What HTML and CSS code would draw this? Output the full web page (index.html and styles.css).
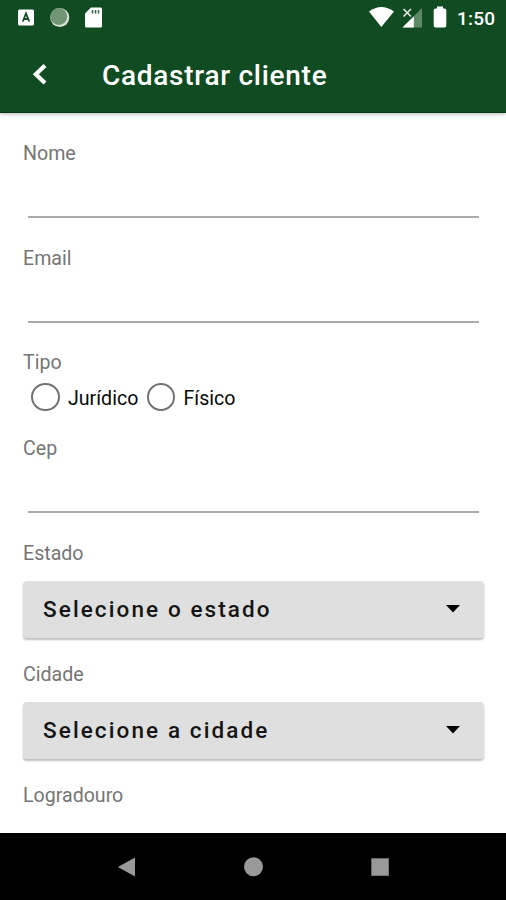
FILE: index.html
```html
<!DOCTYPE html>
<html lang="pt-BR">
<head>
<meta charset="utf-8">
<title>Cadastrar cliente</title>
<link rel="stylesheet" href="styles.css">
</head>
<body>
<div class="screen">
  <header class="header">
    <div class="status">
      <svg class="status-left" width="110" height="36" viewBox="0 0 110 36">
        <rect x="18" y="9.5" width="16" height="16" rx="1.5" fill="#fff"/>
        <path d="M22.8 21.5 26 13.5l3.2 8M24 19h4" fill="none" stroke="#174b25" stroke-width="1.8"/>
        <circle cx="59.8" cy="17.500" r="9.500" fill="#d7e6d8"/>
        <circle cx="58.800" cy="16.500" r="8.500" fill="#729477"/>
        <path d="M91 7.5h9.5q1.5 0 1.5 1.5v17q0 1.5-1.5 1.5h-14Q85 27.500 85 26V13.500z" fill="#fff"/>
        <path d="M92.500 10v3.500M95.500 10v3.500M98.500 10v3.500" stroke="#416b4b" stroke-width="1.600"/>
      </svg>
      <svg class="status-right" width="90" height="36" viewBox="365 0 90 36">
        <path d="M369 11.500Q381.300 2.500 394 11.500L381.300 27z" fill="#fff"/>
        <path d="M422 8v19.500h-19.500z" fill="#5e8968"/>
        <path d="M413.800 16.200v11.300H402.500z" fill="#fff"/>
        <path d="m403.500 9 7.500 7.500m0-7.500-7.500 7.500" stroke="#dce8de" stroke-width="1.700"/>
        <path d="M437 6.500h6v2h1.500q1.800 0 1.800 1.800v15.400q0 1.800-1.800 1.800h-9q-1.800 0-1.800-1.800V10.300q0-1.800 1.800-1.800h1.500z" fill="#fff"/>
      </svg>
      <span class="clock">1:50</span>
    </div>
    <div class="bar">
      <svg class="back" width="16" height="24" viewBox="0 0 16 24"><path d="M14 2.500 4.800 11.300l9.200 8.800" fill="none" stroke="#fff" stroke-width="4.200"/></svg>
      <h1 class="title">Cadastrar cliente</h1>
    </div>
  </header>
  <main class="form">
    <div class="field"><label class="label" for="nome">Nome</label><input class="input" id="nome"></div>
    <div class="field"><label class="label" for="email">Email</label><input class="input" id="email"></div>
    <div class="types">
      <span class="label">Tipo</span>
      <div class="options">
        <span class="radio"></span><span class="option first">Jurídico</span>
        <span class="radio"></span><span class="option">Físico</span>
      </div>
    </div>
    <div class="field"><label class="label" for="cep">Cep</label><input class="input" id="cep"></div>
    <div class="choice"><span class="label">Estado</span>
      <div class="select"><span class="estado">Selecione o estado</span><svg width="14" height="8" viewBox="0 0 14 8"><path d="M0 0h14L7 7.500z"/></svg></div>
    </div>
    <div class="choice"><span class="label">Cidade</span>
      <div class="select"><span class="cidade">Selecione a cidade</span><svg width="14" height="8" viewBox="0 0 14 8"><path d="M0 0h14L7 7.500z"/></svg></div>
    </div>
    <span class="label">Logradouro</span>
  </main>
  <nav class="nav">
    <svg width="20" height="20" viewBox="0 0 20 20"><path d="M.8 10 18 .5v19z" fill="#999"/></svg>
    <svg width="20" height="20" viewBox="0 0 20 20"><circle cx="9.500" cy="9.800" r="9.500" fill="#999"/></svg>
    <svg width="20" height="20" viewBox="0 0 20 20"><path d="M1.300 1.300h17.500v17.500H1.300z" fill="#999"/></svg>
  </nav>
</div>
</body>
</html>
```

FILE: styles.css
```css
* { box-sizing: border-box; }
body { margin: 0; background: #fff; font-family: Roboto, sans-serif; }
.screen { width: 506px; height: 900px; display: flex; flex-direction: column; overflow: hidden; }
.header { height: 113px; flex: none; background: #104b22; color: #fff; border-bottom: 1px solid #0a3514; box-shadow: 0 1px 4px rgba(0,0,0,.3); }
.status { display: flex; height: 36px; }
.status svg { display: block; }
.status-right { margin-left: 255px; }
.clock { margin-left: 2px; font-size: 19px; font-weight: 500; line-height: 37px; letter-spacing: .2px; white-space: nowrap; }
.bar { display: flex; align-items: center; height: 77px; padding-left: 31px; }
.title { margin: 2px 0 0 55px; font-size: 28px; font-weight: 500; line-height: 36px; letter-spacing: .72px; white-space: nowrap; }
.form { flex: 1; min-height: 0; padding: 26px 22px 0 23px; overflow: hidden; }
.label { display: block; height: 28px; line-height: 29px; font-size: 19.6px; color: #757575; white-space: nowrap; }
.field { height: 104.7px; }
.input { display: block; width: 451px; height: 51px; margin: 0 0 0 5px; padding: 0; border: 0; border-bottom: 2px solid #aaa; border-radius: 0; background: transparent; outline: 0; font: 20px Roboto, sans-serif; }
.types { height: 86px; }
.options { display: flex; align-items: center; height: 42px; padding-left: 8px; }
.radio { width: 28.500px; height: 28px; border: 2.5px solid #737373; border-radius: 50%; }
.option { margin: 3px 0 0 8.5px; font-size: 19.6px; line-height: 28px; color: #080808; white-space: nowrap; }
.first { width: 78.5px; }
.choice { height: 121px; }
.select { display: flex; align-items: center; justify-content: space-between; height: 57px; margin-top: 14px; padding: 0 24px 2px 20px; border-radius: 4px; background: #dfdfdf; color: #151515; font-size: 22.5px; font-weight: 500; letter-spacing: 2.1px; box-shadow: 0 2px 2px rgba(0,0,0,.25); white-space: nowrap; }
.nav { display: flex; flex: none; align-items: center; justify-content: space-between; height: 67px; padding: 0 116px 0 117px; background: #000; }
```
